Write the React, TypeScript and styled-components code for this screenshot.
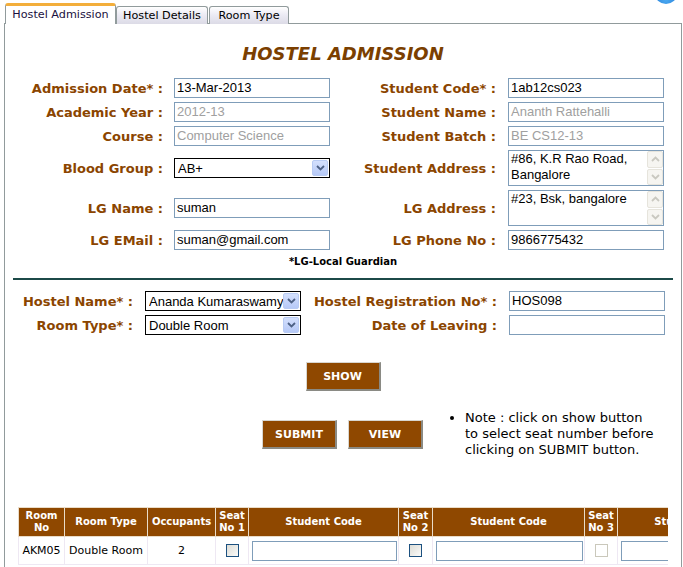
import React from "react";
import styled, { createGlobalStyle, css } from "styled-components";

const GlobalStyle = createGlobalStyle`
  html, body { margin: 0; padding: 0; background: #fff; }
  body { font-family: "DejaVu Sans", Verdana, sans-serif; }
  * { box-sizing: border-box; }
`;

const BROWN = "#8b4500";
const BTN = "#8f4800";

const Page = styled.div`
  position: relative;
  width: 683px;
  height: 567px;
  overflow: hidden;
  padding: 3px 0 0 4px;
`;

const Orb = styled.div`
  position: absolute;
  top: -16px;
  left: 655px;
  width: 22px;
  height: 20px;
  border-radius: 50%;
  background: radial-gradient(circle at 50% 80%, #4aa8f0, #1a6fd0);
`;

const TabBar = styled.div`
  display: flex;
  align-items: flex-end;
  padding-left: 1px;
  height: 21px;
  margin-bottom: -1px;
  position: relative;
  z-index: 1;
`;

const Tab = styled.div<{ $active?: boolean; $w: number }>`
  width: ${(p) => p.$w}px;
  font-size: 11.2px;
  color: #000;
  border: 1px solid #919b9c;
  border-bottom: none;
  border-radius: 3px 3px 0 0;
  display: flex;
  align-items: center;
  justify-content: center;
  white-space: nowrap;
  ${(p) =>
    p.$active
      ? css`
          height: 21px;
          background: #fff;
          border-top: 3px solid #f3ae3b;
          color: #1a1040;
          padding-bottom: 1px;
        `
      : css`
          height: 18px;
          background: linear-gradient(#ffffff, #ecebf4 45%, #dcdbe6);
          margin-right: 1px;
        `}
`;

const Panel = styled.div`
  width: 678px;
  height: 560px;
  border: 1px solid #919b9c;
  border-bottom: none;
  background: #fff;
`;

const Title = styled.h1`
  margin: 0;
  padding-top: 19px;
  height: 53px;
  text-align: center;
  font-size: 18px;
  font-weight: bold;
  font-style: italic;
  line-height: 22px;
  color: #7b3f00;
`;

const FormGrid = styled.div<{ $cols: string; $mt: number }>`
  display: grid;
  grid-template-columns: ${(p) => p.$cols};
  row-gap: 4px;
  align-items: center;
  margin-top: ${(p) => p.$mt}px;
`;

const Label = styled.div<{ $pr: number }>`
  text-align: right;
  padding-right: ${(p) => p.$pr}px;
  font-size: 13px;
  font-weight: bold;
  color: ${BROWN};
  white-space: nowrap;
`;

const TextInput = styled.div<{ $disabled?: boolean }>`
  width: 156px;
  height: 20px;
  border: 1px solid #7f9db9;
  padding: 0 2px;
  font-family: "Liberation Sans", Arial, sans-serif;
  font-size: 13px;
  line-height: 18px;
  color: ${(p) => (p.$disabled ? "#a0a0a0" : "#000")};
  background: #fff;
  white-space: nowrap;
  overflow: hidden;
`;

const SelectBox = styled.div`
  width: 156px;
  height: 20px;
  border: 1px solid #000;
  display: flex;
  align-items: center;
  padding: 0 1px 0 3px;
  font-family: "Liberation Sans", Arial, sans-serif;
  font-size: 13px;
  background: #fff;
`;

const SelectText = styled.span`
  flex: 1;
  white-space: nowrap;
  overflow: hidden;
`;

const SelectArrow = styled.span`
  width: 16px;
  height: 16px;
  border: 1px solid #b8cbf4;
  border-radius: 2px;
  background: linear-gradient(#d4e0fd, #b6c9f7);
  display: flex;
  align-items: center;
  justify-content: center;
`;

const AreaBox = styled.div`
  width: 156px;
  height: 36px;
  border: 1px solid #7f9db9;
  display: flex;
  background: #fff;
`;

const AreaText = styled.div`
  flex: 1;
  padding: 0 2px;
  font-family: "Liberation Sans", Arial, sans-serif;
  font-size: 13px;
  line-height: 16px;
  color: #000;
`;

const ScrollCol = styled.div`
  width: 17px;
  display: flex;
  flex-direction: column;
  gap: 1px;
  padding: 0 0 0 1px;
`;

const ScrollBtn = styled.div`
  flex: 1;
  border: 1px solid #e6e4dc;
  border-radius: 2px;
  background: #f6f5f1;
  display: flex;
  align-items: center;
  justify-content: center;
`;

const FootNote = styled.div`
  text-align: center;
  font-size: 10px;
  font-weight: bold;
  color: #000;
  margin-top: 6px;
  line-height: 12px;
`;

const Divider = styled.hr`
  margin: 10px 8px 0 8px;
  border: none;
  height: 2px;
  background: #1c4a48;
`;

const ButtonRow = styled.div`
  display: flex;
  justify-content: center;
  margin-top: 27px;
`;

const Button = styled.button`
  width: 75px;
  height: 29px;
  background: ${BTN};
  color: #fff;
  font-family: "DejaVu Sans", Verdana, sans-serif;
  font-size: 11px;
  font-weight: bold;
  border-style: solid;
  border-width: 1px 2px 2px 1px;
  border-color: #d8d6d0 #8a8a84 #8a8a84 #d8d6d0;
  padding: 0;
  cursor: pointer;
`;

const ActionRow = styled.div`
  display: flex;
  align-items: flex-start;
  margin-top: 19px;
  padding-left: 257px;
  height: 48px;
`;

const ActionButtons = styled.div`
  display: flex;
  gap: 11px;
  margin-top: 10px;
`;

const NoteList = styled.ul`
  margin: 0 0 0 30px;
  padding: 0 0 0 12px;
  font-size: 13px;
  line-height: 16px;
  color: #000;
  white-space: nowrap;
`;

const TableWrap = styled.div`
  margin: 49px 0 0 13px;
  width: 650px;
  overflow: hidden;
`;

const Table = styled.table`
  border-collapse: collapse;
  table-layout: fixed;
  width: 749px;
`;

const Th = styled.th`
  background: ${BTN};
  color: #fff;
  font-size: 10px;
  font-weight: bold;
  height: 29px;
  line-height: 12px;
  padding: 0 1px;
  border: 1px solid #eadcc8;
  text-align: center;
  overflow: hidden;
`;

const Td = styled.td`
  height: 28px;
  font-size: 11px;
  color: #000;
  padding: 0 2px;
  border: 1px solid #eee8f3;
  text-align: center;
  white-space: nowrap;
`;

const InputTd = styled(Td)`
  padding: 0 1px 0 3px;
`;

const CellInput = styled.div`
  height: 20px;
  border: 1px solid #7f9db9;
  background: #fff;
`;

const Check = styled.span<{ $disabled?: boolean }>`
  display: inline-block;
  width: 13px;
  height: 13px;
  vertical-align: middle;
  border: 1px solid ${(p) => (p.$disabled ? "#cac8bb" : "#1c5180")};
  background: ${(p) =>
    p.$disabled ? "#fff" : "linear-gradient(135deg, #dcdcd6, #fbfbf9)"};
`;

const Chevron = ({ up, color }: { up?: boolean; color: string }) => (
  <svg width="9" height="6" viewBox="0 0 9 6">
    <path
      d={up ? "M1 5 L4.5 1.5 L8 5" : "M1 1 L4.5 4.5 L8 1"}
      fill="none"
      stroke={color}
      strokeWidth="1.8"
    />
  </svg>
);

const Select = ({ value }: { value: string }) => (
  <SelectBox>
    <SelectText>{value}</SelectText>
    <SelectArrow>
      <Chevron color="#4d6185" />
    </SelectArrow>
  </SelectBox>
);

const Area = ({ children }: { children: React.ReactNode }) => (
  <AreaBox>
    <AreaText>{children}</AreaText>
    <ScrollCol>
      <ScrollBtn>
        <Chevron up color="#c9c8c0" />
      </ScrollBtn>
      <ScrollBtn>
        <Chevron color="#c9c8c0" />
      </ScrollBtn>
    </ScrollCol>
  </AreaBox>
);

const TOP_COLS = "169px 156px 178px 156px";
const BOTTOM_COLS = "140px 156px 208px 156px";
const COL_WIDTHS = [46, 83, 68, 33, 150, 34, 152, 33, 150];

export default function App() {
  return (
    <>
      <GlobalStyle />
      <Page>
        <Orb />
        <TabBar>
          <Tab $active $w={111}>Hostel Admission</Tab>
          <Tab $w={92}>Hostel Details</Tab>
          <Tab $w={80}>Room Type</Tab>
        </TabBar>
        <Panel>
          <Title>HOSTEL ADMISSION</Title>
          <FormGrid $cols={TOP_COLS} $mt={1}>
            <Label $pr={11}>Admission Date* :</Label>
            <TextInput>13-Mar-2013</TextInput>
            <Label $pr={12}>Student Code* :</Label>
            <TextInput>1ab12cs023</TextInput>

            <Label $pr={11}>Academic Year :</Label>
            <TextInput $disabled>2012-13</TextInput>
            <Label $pr={12}>Student Name :</Label>
            <TextInput $disabled>Ananth Rattehalli</TextInput>

            <Label $pr={11}>Course :</Label>
            <TextInput $disabled>Computer Science</TextInput>
            <Label $pr={12}>Student Batch :</Label>
            <TextInput $disabled>BE CS12-13</TextInput>

            <Label $pr={11}>Blood Group :</Label>
            <Select value="AB+" />
            <Label $pr={12}>Student Address :</Label>
            <Area>
              #86, K.R Rao Road,
              <br />
              Bangalore
            </Area>

            <Label $pr={11}>LG Name :</Label>
            <TextInput>suman</TextInput>
            <Label $pr={12}>LG Address :</Label>
            <Area>#23, Bsk, bangalore</Area>

            <Label $pr={11}>LG EMail :</Label>
            <TextInput>suman@gmail.com</TextInput>
            <Label $pr={12}>LG Phone No :</Label>
            <TextInput>9866775432</TextInput>
          </FormGrid>
          <FootNote>*LG-Local Guardian</FootNote>
          <Divider />
          <FormGrid $cols={BOTTOM_COLS} $mt={11}>
            <Label $pr={12}>Hostel Name* :</Label>
            <Select value="Ananda Kumaraswamy" />
            <Label $pr={12}>Hostel Registration No* :</Label>
            <TextInput>HOS098</TextInput>

            <Label $pr={12}>Room Type* :</Label>
            <Select value="Double Room" />
            <Label $pr={12}>Date of Leaving :</Label>
            <TextInput />
          </FormGrid>
          <ButtonRow>
            <Button>SHOW</Button>
          </ButtonRow>
          <ActionRow>
            <ActionButtons>
              <Button>SUBMIT</Button>
              <Button>VIEW</Button>
            </ActionButtons>
            <NoteList>
              <li>
                Note : click on show button
                <br />
                to select seat number before
                <br />
                clicking on SUBMIT button.
              </li>
            </NoteList>
          </ActionRow>
          <TableWrap>
            <Table>
              <colgroup>
                {COL_WIDTHS.map((w, i) => (
                  <col key={i} style={{ width: w }} />
                ))}
              </colgroup>
              <thead>
                <tr>
                  <Th>Room No</Th>
                  <Th>Room Type</Th>
                  <Th>Occupants</Th>
                  <Th>Seat No 1</Th>
                  <Th>Student Code</Th>
                  <Th>Seat No 2</Th>
                  <Th>Student Code</Th>
                  <Th>Seat No 3</Th>
                  <Th>Student Code</Th>
                </tr>
              </thead>
              <tbody>
                <tr>
                  <Td>AKM05</Td>
                  <Td>Double Room</Td>
                  <Td>2</Td>
                  <Td><Check /></Td>
                  <InputTd><CellInput /></InputTd>
                  <Td><Check /></Td>
                  <InputTd><CellInput /></InputTd>
                  <Td><Check $disabled /></Td>
                  <InputTd><CellInput /></InputTd>
                </tr>
              </tbody>
            </Table>
          </TableWrap>
        </Panel>
      </Page>
    </>
  );
}
